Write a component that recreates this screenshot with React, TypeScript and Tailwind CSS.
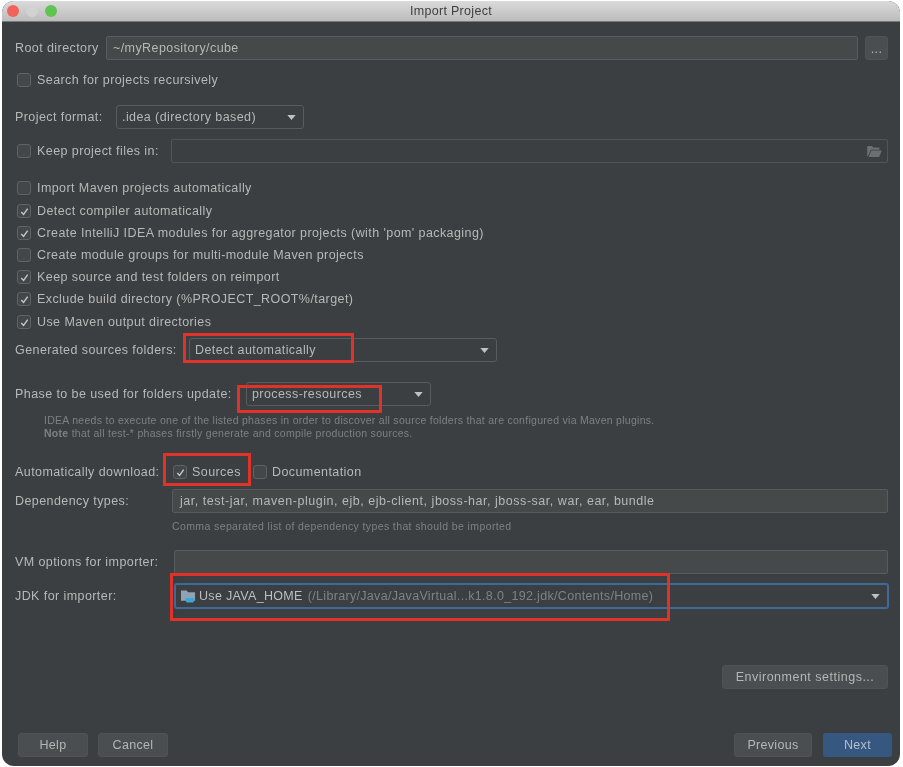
import React from "react";

const Check = ({ on = false }: { on?: boolean }) => (
  <span className="flex h-[14px] w-[14px] shrink-0 items-center justify-center rounded-[3px] border border-[#606364] bg-[#43474a]">
    {on && (
      <svg viewBox="0 0 12 12" className="h-[11px] w-[11px]" fill="none" stroke="#c4c6c7" strokeWidth="1.6">
        <path d="M2.5 6.5 5 9.2 9.5 2.8" />
      </svg>
    )}
  </span>
);

const CheckRow = ({ label, on, className = "" }: { label: string; on?: boolean; className?: string }) => (
  <div className={`flex h-[22px] items-center gap-[6px] pl-[2px] ${className}`}>
    <Check on={on} />
    <span>{label}</span>
  </div>
);

const Arrow = () => (
  <svg viewBox="0 0 10 6" className="h-[5px] w-[9px] shrink-0" fill="#bfc1c2">
    <path d="M0 0h10L5 6z" />
  </svg>
);

const Combo = ({ text, className = "" }: { text: string; className?: string }) => (
  <div className={`flex h-[24px] items-center justify-between rounded-[3px] border border-[#595c5e] bg-[#3c3f41] pl-[5px] pr-[7px] ${className}`}>
    <span>{text}</span>
    <Arrow />
  </div>
);

const Button = ({ text, className = "" }: { text: string; className?: string }) => (
  <div className={`flex h-[24px] items-center justify-center rounded-[3px] border border-[#505354] bg-[#4a4e50] text-[#b4b6b7] ${className}`}>
    {text}
  </div>
);

const RedBox = ({ className }: { className: string }) => (
  <div className={`absolute border-[3px] border-[#df3229] ${className}`} />
);

export default function App() {
  return (
    <div className="relative h-[767px] w-[903px] overflow-hidden bg-white pl-[2px] pt-[1px] blur-[0.5px]">
      <div className="flex h-[765px] w-[898px] flex-col overflow-hidden rounded-[12px] bg-[#3c3f41] font-['Liberation_Sans',sans-serif] text-[12.5px] tracking-[0.42px] text-[#b6b8b9]">
        {/* title bar */}
        <div className="relative flex h-[21px] shrink-0 items-center justify-center border-b border-[#77797a] bg-gradient-to-b from-[#dadada] to-[#bcbcbc] text-[12.5px] tracking-[0.3px] text-[#3f3f3f]">
          <div className="absolute left-[5px] top-[4px] flex gap-[7px]">
            <span className="h-[12px] w-[12px] rounded-full bg-[#f0625a]" />
            <span className="h-[12px] w-[12px] rounded-full bg-[#d2d2d2]" />
            <span className="h-[12px] w-[12px] rounded-full bg-[#5fc452]" />
          </div>
          Import Project
        </div>

        <div className="flex flex-1 flex-col pl-[13px] pr-[12px]">
          <div className="mt-[14px] flex h-[24px] items-center">
            <span className="w-[91px] shrink-0">Root directory</span>
            <div className="flex h-full flex-1 items-center rounded-[2px] border border-[#595c5e] bg-[#45494a] pl-[6px]">~/myRepository/cube</div>
            <Button text="..." className="ml-[7px] w-[23px] pt-[2px]" />
          </div>

          <CheckRow label="Search for projects recursively" className="mt-[9px]" />

          <div className="mt-[14px] flex items-center">
            <span className="w-[101px] shrink-0">Project format:</span>
            <Combo text=".idea (directory based)" className="w-[188px]" />
          </div>

          <div className="mt-[10px] flex h-[24px] items-center pl-[2px]">
            <Check />
            <span className="ml-[6px] w-[134px] shrink-0">Keep project files in:</span>
            <div className="flex h-full flex-1 items-center justify-end rounded-[2px] border border-[#525557] bg-[#3c3f41] pr-[5px]">
              <svg viewBox="0 0 16 12" className="h-[11px] w-[15px]" fill="#6b6f70">
                <path d="M0 1.5C0 .7.6 0 1.4 0h4l1.400 1.6h5.400c.7 0 1.200.5 1.200 1.200V4H4L1 11H0z" />
                <path d="M4.600 5H16l-2.800 7H1.600z" />
              </svg>
            </div>
          </div>

          <div className="mt-[14px] flex flex-col">
            <CheckRow label="Import Maven projects automatically" />
            <CheckRow label="Detect compiler automatically" on className="mt-px" />
            <CheckRow label="Create IntelliJ IDEA modules for aggregator projects (with 'pom' packaging)" on />
            <CheckRow label="Create module groups for multi-module Maven projects" />
            <CheckRow label="Keep source and test folders on reimport" on />
            <CheckRow label="Exclude build directory (%PROJECT_ROOT%/target)" on />
            <CheckRow label="Use Maven output directories" on className="mt-px" />
          </div>

          <div className="mt-[5px] flex items-center">
            <span className="w-[174px] shrink-0">Generated sources folders:</span>
            <Combo text="Detect automatically" className="w-[308px]" />
          </div>

          <div className="mt-[20px] flex items-center">
            <span className="w-[231px] shrink-0">Phase to be used for folders update:</span>
            <Combo text="process-resources" className="w-[185px]" />
          </div>

          <div className="mt-[8px] pl-[29px] text-[10.5px] leading-[13px] tracking-[0.28px] text-[#7d8082]">
            <div>IDEA needs to execute one of the listed phases in order to discover all source folders that are configured via Maven plugins.</div>
            <div>
              <span className="font-bold">Note</span> that all test-* phases firstly generate and compile production sources.
            </div>
          </div>

          <div className="mt-[21px] flex h-[22px] items-center">
            <span className="w-[158px] shrink-0">Automatically download:</span>
            <Check on />
            <span className="ml-[5px] w-[61px] shrink-0">Sources</span>
            <Check />
            <span className="ml-[5px]">Documentation</span>
          </div>

          <div className="mt-[6px] flex h-[24px] items-center">
            <span className="w-[157px] shrink-0">Dependency types:</span>
            <div className="flex h-full flex-1 items-center rounded-[2px] border border-[#595c5e] bg-[#45494a] pl-[7px] tracking-[0.53px]">
              jar, test-jar, maven-plugin, ejb, ejb-client, jboss-har, jboss-sar, war, ear, bundle
            </div>
          </div>

          <div className="mt-[7px] pl-[157px] text-[10.5px] leading-[13px] tracking-[0.39px] text-[#7d8082]">
            Comma separated list of dependency types that should be imported
          </div>

          <div className="mt-[17px] flex h-[24px] items-center">
            <span className="w-[159px] shrink-0">VM options for importer:</span>
            <div className="h-full flex-1 rounded-[2px] border border-[#595c5e] bg-[#45494a]" />
          </div>

          <div className="mt-[9px] flex h-[26px] items-center">
            <span className="w-[159px] shrink-0">JDK for importer:</span>
            <div className="-mr-px flex h-full flex-1 items-center justify-between rounded-[3px] border-2 border-[#3d6a9b] pl-[5px] pr-[7px] tracking-[0.32px]">
              <span className="flex items-center gap-[3px]">
                <svg viewBox="0 0 16 14" className="h-[14px] w-[15px]">
                  <path d="M0 1h6l1.500 2H15v9H0z" fill="#8fa3b5" />
                  <path d="M5 9h9v2.500c0 1.400-1 2.500-2.500 2.500h-4C6 14 5 12.900 5 11.500z" fill="#3aa6dc" />
                </svg>
                <span className="text-[#bdbfc0]">Use JAVA_HOME</span>
                <span className="ml-[2px] text-[#7f8385]">(/Library/Java/JavaVirtual...k1.8.0_192.jdk/Contents/Home)</span>
              </span>
              <Arrow />
            </div>
          </div>

          <div className="mt-[56px] flex justify-end">
            <Button text="Environment settings..." className="w-[166px] tracking-[0.5px]" />
          </div>

          <div className="-mr-[4px] ml-[3px] mt-[44px] flex items-center tracking-[0.32px]">
            <Button text="Help" className="w-[70px]" />
            <Button text="Cancel" className="ml-[10px] w-[70px]" />
            <Button text="Previous" className="ml-auto w-[78px]" />
            <div className="ml-[11px] flex h-[24px] w-[69px] items-center justify-center rounded-[3px] bg-[#365880] text-[#b4bfca]">Next</div>
          </div>
        </div>
      </div>

      <RedBox className="left-[183px] top-[333px] h-[30px] w-[171px]" />
      <RedBox className="left-[237px] top-[385px] h-[28px] w-[145px]" />
      <RedBox className="left-[163px] top-[453px] h-[33px] w-[88px]" />
      <RedBox className="left-[170px] top-[573px] h-[48px] w-[500px]" />
    </div>
  );
}
